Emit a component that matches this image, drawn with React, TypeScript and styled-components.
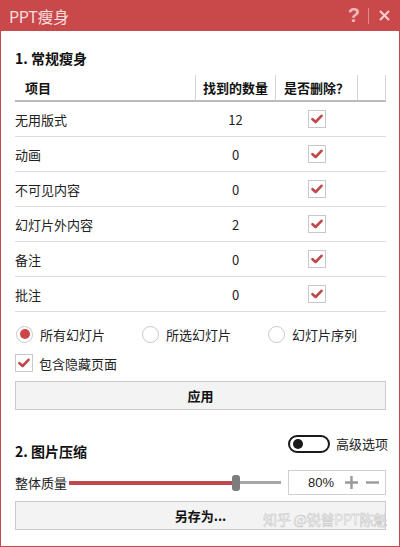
import React from 'react';
import styled, { createGlobalStyle } from 'styled-components';

const GlobalStyle = createGlobalStyle`
    html, body {
        margin: 0;
        padding: 0;
        background: #ffffff;
    }
    body {
        font-family: 'Noto Sans CJK SC', 'Noto Sans', 'Liberation Sans', sans-serif;
        font-size: 13px;
        color: #222;
    }
`;

const Window = styled.div`
    position: relative;
    width: 400px;
    height: 547px;
    box-sizing: border-box;
    border: 1px solid #c9494a;
    border-top: none;
    background: #fff;
    display: flex;
    flex-direction: column;
`;

const TitleBar = styled.div`
    height: 31px;
    margin: 0 -1px;
    background: #c9494a;
    display: flex;
    align-items: center;
    padding: 0 10px 0 9px;
    color: #f8dede;
`;

const Title = styled.div`
    flex: 1;
    font-size: 16px;
    letter-spacing: -0.3px;
`;

const TitleButton = styled.span`
    font-family: 'Liberation Sans', sans-serif;
    font-size: 20px;
    font-weight: bold;
    color: #f0b8b8;
`;

const TitleSep = styled.span`
    width: 1px;
    height: 16px;
    background: #e08a8a;
    margin: 0 10px 0 8px;
`;

const Body = styled.div`
    padding: 0 13px 0 14px;
    display: flex;
    flex-direction: column;
`;

const SectionTitle = styled.div`
    font-size: 14px;
    font-weight: bold;
    color: #111;
    padding: 17px 0 7px;
`;

const Table = styled.div`
    display: grid;
    grid-template-columns: 180px 81px 82px 1fr;
`;

const HeadCell = styled.div<{ $first?: boolean; $center?: boolean }>`
    height: 25px;
    display: flex;
    align-items: center;
    justify-content: ${({ $center }) => ($center ? 'center' : 'flex-start')};
    padding-left: ${({ $first }) => ($first ? '10px' : '0')};
    font-weight: bold;
    color: #111;
    border-right: ${({ $first }) => ($first ? 'none' : '1px solid #d4d4d4')};
    border-bottom: 2px solid #b9b9b9;
    &:nth-child(2) {
        border-left: 1px solid #d4d4d4;
    }
`;

const Cell = styled.div<{ $center?: boolean }>`
    height: 34px;
    display: flex;
    align-items: center;
    justify-content: ${({ $center }) => ($center ? 'center' : 'flex-start')};
    border-bottom: 1px solid #dcdcdc;
    color: #222;
`;

const CheckBox = styled.span`
    display: inline-flex;
    align-items: center;
    justify-content: center;
    width: 16px;
    height: 16px;
    border: 1px solid #c8c8c8;
    background: #fff;
    box-sizing: content-box;
`;

const Check: React.FC = () => (
    <CheckBox>
        <svg width="12" height="10" viewBox="0 0 12 10">
            <path d="M1.5 5.2 L4.6 8 L10.5 1.8" fill="none" stroke="#c0484a" strokeWidth="2.6" strokeLinecap="round" strokeLinejoin="round" />
        </svg>
    </CheckBox>
);

const RadioRow = styled.div`
    display: grid;
    grid-template-columns: 126px 126px 1fr;
    padding: 12px 0 0 1px;
    height: 20px;
    align-items: center;
`;

const RadioItem = styled.label`
    display: flex;
    align-items: center;
    gap: 7px;
`;

const RadioCircle = styled.span<{ $on?: boolean }>`
    width: 15px;
    height: 15px;
    border-radius: 50%;
    border: 1px solid #c8c8c8;
    display: inline-flex;
    align-items: center;
    justify-content: center;
    &::after {
        content: '';
        width: 10px;
        height: 10px;
        border-radius: 50%;
        background: ${({ $on }) => ($on ? '#cc4548' : 'transparent')};
    }
`;

const CheckRow = styled.label`
    display: flex;
    align-items: center;
    gap: 6px;
    padding-top: 9px;
    height: 20px;
`;

const Button = styled.div`
    height: 27px;
    border: 1px solid #cacaca;
    background: #f3f3f3;
    display: flex;
    align-items: center;
    justify-content: center;
    font-weight: bold;
    color: #111;
`;

const ApplyButton = styled(Button)`
    margin-top: 8px;
`;

const SaveButton = styled(Button)`
    margin-top: 6px;
`;

const SectionHead = styled.div`
    display: flex;
    justify-content: space-between;
    align-items: flex-start;
    padding-top: 23px;
`;

const Section2Title = styled.div`
    font-size: 14px;
    font-weight: bold;
    color: #111;
    padding-top: 8px;
`;

const ToggleWrap = styled.label`
    display: flex;
    align-items: center;
    gap: 6px;
    margin: 1px -2px 0 0;
`;

const Toggle = styled.span`
    width: 32px;
    height: 14px;
    border: 2px solid #1a1a1a;
    border-radius: 10px;
    display: flex;
    align-items: center;
    padding: 0 3px;
    &::before {
        content: '';
        width: 10px;
        height: 10px;
        border-radius: 50%;
        background: #1a1a1a;
    }
`;

const SliderRow = styled.div`
    display: flex;
    align-items: center;
    margin-top: 9px;
    height: 25px;
`;

const SliderLabel = styled.span`
    width: 54px;
`;

const Slider = styled.div`
    width: 212px;
    height: 16px;
    display: flex;
    align-items: center;
`;

const TrackFill = styled.div`
    height: 4px;
    background: #c0494b;
`;

const TrackRest = styled.div`
    flex: 1;
    height: 3px;
    background: #a6a6a6;
`;

const Thumb = styled.div`
    width: 8px;
    height: 16px;
    border-radius: 3px;
    background: #7d7d7d;
`;

const ValueBox = styled.div`
    margin-left: auto;
    width: 98px;
    height: 25px;
    border: 1px solid #cfcfcf;
    display: flex;
    align-items: center;
    justify-content: flex-end;
    gap: 6px;
    padding-right: 5px;
    box-sizing: border-box;
`;

const ValueText = styled.span`
    font-family: 'Liberation Sans', sans-serif;
    margin-right: 4px;
`;

const Watermark = styled.div`
    position: absolute;
    right: 12px;
    bottom: 17px;
    font-size: 14px;
    color: rgba(255, 255, 255, 0.85);
    -webkit-text-stroke: 0.5px #c4c4c4;
    letter-spacing: -0.2px;
`;

const rows = [
    { name: '无用版式', count: 12 },
    { name: '动画', count: 0 },
    { name: '不可见内容', count: 0 },
    { name: '幻灯片外内容', count: 2 },
    { name: '备注', count: 0 },
    { name: '批注', count: 0 },
];

const App: React.FC = () => {
    const quality = 80;
    return (
        <>
            <GlobalStyle />
            <Window>
                <TitleBar>
                    <Title>PPT瘦身</Title>
                    <TitleButton>?</TitleButton>
                    <TitleSep />
                    <svg width="11" height="11" viewBox="0 0 11 11">
                        <path d="M1 1 L10 10 M10 1 L1 10" stroke="#f6d0d0" strokeWidth="2" />
                    </svg>
                </TitleBar>
                <Body>
                    <SectionTitle>1. 常规瘦身</SectionTitle>
                    <Table>
                        <HeadCell $first>项目</HeadCell>
                        <HeadCell $center>找到的数量</HeadCell>
                        <HeadCell $center>是否删除？</HeadCell>
                        <HeadCell />
                        {rows.map((r) => (
                            <React.Fragment key={r.name}>
                                <Cell>{r.name}</Cell>
                                <Cell $center>{r.count}</Cell>
                                <Cell $center>
                                    <Check />
                                </Cell>
                                <Cell />
                            </React.Fragment>
                        ))}
                    </Table>
                    <RadioRow>
                        <RadioItem>
                            <RadioCircle $on />
                            所有幻灯片
                        </RadioItem>
                        <RadioItem>
                            <RadioCircle />
                            所选幻灯片
                        </RadioItem>
                        <RadioItem>
                            <RadioCircle />
                            幻灯片序列
                        </RadioItem>
                    </RadioRow>
                    <CheckRow>
                        <Check />
                        包含隐藏页面
                    </CheckRow>
                    <ApplyButton>应用</ApplyButton>
                    <SectionHead>
                        <Section2Title>2. 图片压缩</Section2Title>
                        <ToggleWrap>
                            <Toggle />
                            高级选项
                        </ToggleWrap>
                    </SectionHead>
                    <SliderRow>
                        <SliderLabel>整体质量</SliderLabel>
                        <Slider>
                            <TrackFill style={{ width: `${quality * 2.04}px` }} />
                            <Thumb />
                            <TrackRest />
                        </Slider>
                        <ValueBox>
                            <ValueText>{quality}%</ValueText>
                            <svg width="15" height="15" viewBox="0 0 15 15">
                                <path d="M7.5 1 V14 M1 7.5 H14" stroke="#9a9a9a" strokeWidth="2.4" />
                            </svg>
                            <svg width="15" height="15" viewBox="0 0 15 15">
                                <path d="M1 7.5 H14" stroke="#9a9a9a" strokeWidth="2.4" />
                            </svg>
                        </ValueBox>
                    </SliderRow>
                    <SaveButton>另存为...</SaveButton>
                </Body>
                <Watermark>知乎 @锐普PPT陈魁</Watermark>
            </Window>
        </>
    );
};

export default App;
